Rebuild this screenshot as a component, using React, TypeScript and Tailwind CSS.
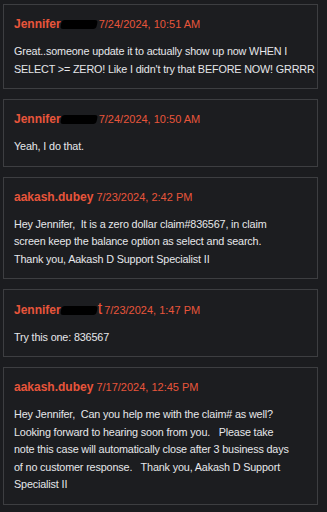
import React from "react";

type Comment = {
  author: string;
  redacted?: boolean;
  tail?: string;
  date: string;
  lines: string[];
};

// line breaks follow the original wrap of the thread panel
const comments: Comment[] = [
  {
    author: "Jennifer",
    redacted: true,
    date: "7/24/2024, 10:51 AM",
    lines: [
      "Great..someone update it to actually show up now WHEN I",
      "SELECT >= ZERO! Like I didn't try that BEFORE NOW! GRRRR",
    ],
  },
  {
    author: "Jennifer",
    redacted: true,
    date: "7/24/2024, 10:50 AM",
    lines: ["Yeah, I do that."],
  },
  {
    author: "aakash.dubey",
    date: "7/23/2024, 2:42 PM",
    lines: [
      "Hey Jennifer,\u00a0 It is a zero dollar claim#836567, in claim",
      "screen keep the balance option as select and search.",
      "Thank you, Aakash D Support Specialist II",
    ],
  },
  {
    author: "Jennifer",
    redacted: true,
    tail: "t",
    date: "7/23/2024, 1:47 PM",
    lines: ["Try this one: 836567"],
  },
  {
    author: "aakash.dubey",
    date: "7/17/2024, 12:45 PM",
    lines: [
      "Hey Jennifer,\u00a0 Can you help me with the claim# as well?",
      "Looking forward to hearing soon from you.\u00a0\u00a0 Please take",
      "note this case will automatically close after 3 business days",
      "of no customer response.\u00a0\u00a0 Thank you, Aakash D Support",
      "Specialist II",
    ],
  },
];

function Redaction({ tail }: { tail?: string }) {
  return (
    <span className="inline-flex items-center align-middle">
      <span className="inline-block h-[9px] w-[36px] rounded-[3px] bg-black -skew-x-12 translate-y-[1px]" />
      {tail && <span className="ml-[1px]">{tail}</span>}
    </span>
  );
}

function CommentCard({ c }: { c: Comment }) {
  return (
    <div className="border border-[#3d3e41] bg-[#1c1d20] px-[10px] pt-[11px] pb-[10px]">
      <div className="flex items-baseline whitespace-nowrap text-[#e8553b] leading-[16px]">
        <span className="text-[12px] font-bold">{c.author}</span>
        {c.redacted ? (
          <>
            <Redaction tail={c.tail} />
            <span className="text-[11px] ml-[2px]">{c.date}</span>
          </>
        ) : (
          <span className="text-[11px] ml-[3px]">{c.date}</span>
        )}
      </div>
      <div className="mt-[11px] text-[10.8px] leading-[17.5px] tracking-[-0.15px] text-[#e6e7ea] whitespace-nowrap">
        {c.lines.map((l, i) => (
          <div key={i}>{l}</div>
        ))}
      </div>
    </div>
  );
}

export default function App() {
  return (
    <div
      className="min-h-[512px] w-[327px] bg-[#1b1c1f] pl-[3px] pr-[9px] pt-[4px] flex flex-col gap-[10px]"
      style={{ fontFamily: '"Liberation Sans", Arial, sans-serif' }}
    >
      {comments.map((c, i) => (
        <CommentCard key={i} c={c} />
      ))}
    </div>
  );
}
